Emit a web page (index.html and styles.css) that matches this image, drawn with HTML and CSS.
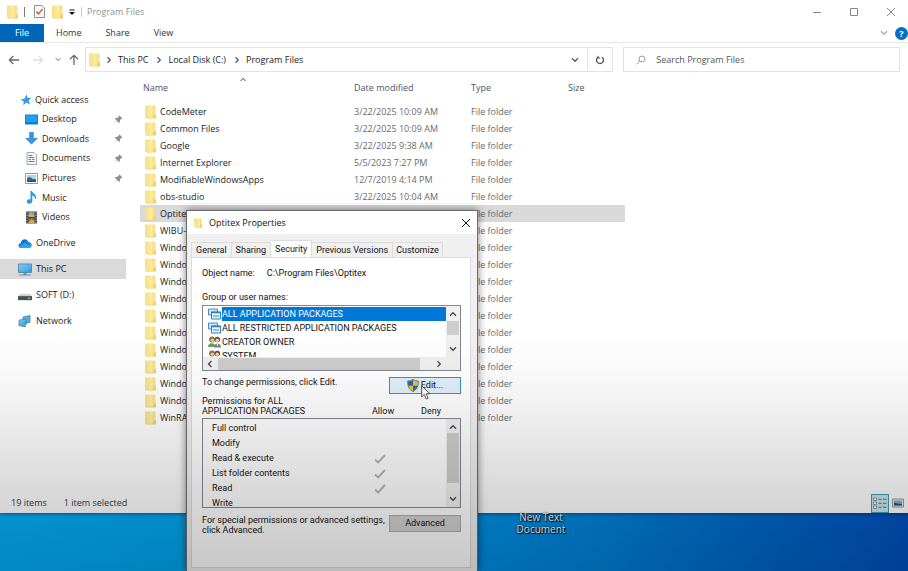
FILE: index.html
```html
<!DOCTYPE html>
<html lang="en">
<head>
<meta charset="utf-8">
<title>Program Files</title>
<link rel="stylesheet" href="styles.css">
</head>
<body>
<svg class="sprite" aria-hidden="true">
  <defs>
    <linearGradient id="g-folder" x1="0" x2="1" y1="0" y2="0"><stop offset="0" stop-color="#f8e080"/><stop offset=".7" stop-color="#fdeb9f"/><stop offset="1" stop-color="#f6d975"/></linearGradient>
    <linearGradient id="g-screen" x1="0" x2="1" y1="0" y2="1"><stop offset="0" stop-color="#7fd0f8"/><stop offset="1" stop-color="#2e97dc"/></linearGradient>
    <linearGradient id="g-cloud" x1="0" x2="1" y1="0" y2="1"><stop offset="0" stop-color="#0b5cb5"/><stop offset="1" stop-color="#28a8ea"/></linearGradient>
  </defs>
  <symbol id="folder" viewBox="0 0 12 14"><path d="M0 .5h9.500v12.500H0z" fill="url(#g-folder)"/><path d="M9 9h2v4.500H1v-.7h7z" fill="#f1d160"/><path d="M9 1l1 .5v9" stroke="#f3dc85" fill="none"/></symbol>
  <symbol id="star" viewBox="0 0 12 12"><path d="M6.500.5l1.200 3.600 3.800-.3-2.900 2.600 1.500 4-3.800-1.800-3 2.700.5-3.900L.5 5.600l4-.8z" fill="#2f9be6"/></symbol>
  <symbol id="desktop" viewBox="0 0 13 11"><path d="M0 .5h13v10H0z" fill="#1583d8"/><path d="M1 1.500h11v7H1z" fill="#1fa0f2"/><path d="M1 8.500h11v1H1z" fill="#0d6fc0"/></symbol>
  <symbol id="download" viewBox="0 0 13 13"><path d="M4.200 0h4.600v6H13l-6.500 6.500L0 6h4.200z" fill="#3c93dc"/></symbol>
  <symbol id="document" viewBox="0 0 12 13"><path d="M1.500.5h7l2.500 2.500v9.500h-9.500z" fill="#f4f8fb" stroke="#9aa9b5"/><path d="M3 3.500h4M3 5.500h6M3 7.500h2.500M6.500 7.500H9M3 9.500h6" stroke="#3f8fc6"/></symbol>
  <symbol id="picture" viewBox="0 0 13 11"><path d="M.5.5h12v10H.5z" fill="#fff" stroke="#8c9aa6"/><path d="M2 2h9v7H2z" fill="#a9d5f1"/><path d="M2 5l3-1 3 2 3 0v3H2z" fill="#336f8c"/><path d="M2 7.500h9V9H2z" fill="#1f5065"/></symbol>
  <symbol id="music" viewBox="0 0 12 13"><path d="M5 0h1.500c.3 2.500 4.500 3 4 6.500-.2 1-.7 1.700-1.200 2 .7-2.300-.8-3.700-2.500-4V10c0 3.500-5.500 3.500-5.500.7C1.300 8.500 3.600 8 5 8.600z" fill="#2c9bdf"/></symbol>
  <symbol id="video" viewBox="0 0 12 13"><path d="M.5.5h11v12H.5z" fill="#3b4352"/><path d="M3 1h6v5H3z" fill="#7e97b8"/><path d="M3 7h6v5H3z" fill="#756b52"/><path d="M3 4l3-2 3 3v1H3zM3 11l3-3 3 2v2H3z" fill="#d2a956"/><path d="M1.500 1.500v11M10.500 1.500v11" stroke="#dce0e4" stroke-dasharray="1 1.500"/></symbol>
  <symbol id="cloud" viewBox="0 0 14 10"><path d="M3.500 9.500C-.5 9.500-.3 5 2.800 4.800 3.300.3 9-.8 10.300 3.600c4.400.1 4.600 5.900.7 5.900z" fill="url(#g-cloud)"/><path d="M1 8l6-3.500L13 8c-.5 1-1 1.500-2.500 1.500h-7C2 9.500 1.500 9 1 8z" fill="#2aa4ea"/></symbol>
  <symbol id="pc" viewBox="0 0 14 12"><path d="M.5.500h13v8.500H.5z" fill="url(#g-screen)" stroke="#5f8aa6"/><path d="M5.500 9.500h3V11h-3zM1 11h12v1H1z" fill="#6f8ea3"/></symbol>
  <symbol id="drive" viewBox="0 0 12 8"><path d="M2 2.500h8l2 2H0z" fill="#d0d2d4"/><path d="M0 4.500h12V8H0z" fill="#4d5153"/><path d="M8.500 6.300h2" stroke="#6fdc82"/></symbol>
  <symbol id="network" viewBox="0 0 14 13"><path d="M5 2l7-1.500v7L5 9z" fill="#5badd9" stroke="#337ca8" stroke-width=".7"/><path d="M1 5l7-1v6l-7 1z" fill="url(#g-screen)" stroke="#347fab" stroke-width=".7"/><path d="M3 11.500l5-.8v1.300H3z" fill="#5f7f90"/></symbol>
  <symbol id="pin" viewBox="0 0 9 9"><path d="M5.300.3l3.200 3.200-1 .3-1.500 1.500-.2 2-.8.600L3 6 .4 8.600l-.2-.2L2.800 5.700.9 3.800l.7-.8 2-.2L5 1.300z" fill="#8b9095"/></symbol>
  <symbol id="chev-down" viewBox="0 0 8 6"><path d="M1 1.300l3 3 3-3" fill="none" stroke="currentColor" stroke-width="1.300"/></symbol>
  <symbol id="chev-up" viewBox="0 0 8 6"><path d="M1 4.700l3-3 3 3" fill="none" stroke="currentColor" stroke-width="1.300"/></symbol>
  <symbol id="chev-right" viewBox="0 0 6 8"><path d="M1.500 1.300L4.300 4l-2.800 2.700" fill="none" stroke="currentColor" stroke-width="1.200"/></symbol>
  <symbol id="chev-left" viewBox="0 0 6 8"><path d="M4.500 1L1.500 4l3 3" fill="none" stroke="currentColor" stroke-width="1.300"/></symbol>
  <symbol id="arrow" viewBox="0 0 12 10"><path d="M11 5H1.500M5.300 1L1.400 5l3.900 4" fill="none" stroke="currentColor" stroke-width="1.300"/></symbol>
  <symbol id="close" viewBox="0 0 10 10"><path d="M1 1l8 8M9 1L1 9" stroke="currentColor" fill="none"/></symbol>
  <symbol id="package" viewBox="0 0 13 11"><path d="M.5.5h9v6h-9z" fill="#c8e4f6" stroke="#4a8fc0"/><path d="M3.500 3.500h9v7h-9z" fill="#e9f5fc" stroke="#317fb8"/><path d="M3 4h10" stroke="#317fb8" stroke-width="1.500"/><path d="M5 7.500h6" stroke="#3b8dc4"/></symbol>
  <symbol id="users" viewBox="0 0 13 12"><circle cx="4" cy="3.500" r="2.900" fill="#8a7140"/><circle cx="4.300" cy="4.300" r="1.700" fill="#e8c79d"/><path d="M0 11c0-5 7.500-5 7.500 0z" fill="#6f9a64"/><circle cx="9.300" cy="3.500" r="2.800" fill="#5c4c3f"/><circle cx="9.300" cy="4.300" r="1.700" fill="#f1d1a8"/><path d="M6 11.500c0-5.500 7-5.500 7 0z" fill="#777f91"/><path d="M8.500 7.500h1.800l-.8 3z" fill="#fff"/></symbol>
  <symbol id="check" viewBox="0 0 12 10"><path d="M1 5.500l3.200 3L11 1" fill="none" stroke="#b4b4b4" stroke-width="1.900"/></symbol>
</svg>

<main class="explorer">
  <header class="titlebar">
    <svg class="i-folder"><use href="#folder"/></svg>
    <span class="rule"></span>
    <svg class="i-check" viewBox="0 0 11 13"><path d="M.5.500h7.500l2.500 2.500v9.500H.5z" fill="#fafafa" stroke="#8e8e8e"/><path d="M2.500 6.500l2 2.500L8.500 4" fill="none" stroke="#dc5140" stroke-width="1.400"/></svg>
    <svg class="i-folder"><use href="#folder"/></svg>
    <svg class="i-quick" viewBox="0 0 6 6"><path d="M.5 1h5" stroke="#111"/><path d="M0 3h6L3 6z" fill="#111"/></svg>
    <span class="rule light"></span>
    <h1>Program Files</h1>
    <div class="caption">
      <button aria-label="Minimize"><svg viewBox="0 0 10 10"><path d="M1 5.500h8" stroke="currentColor"/></svg></button>
      <button aria-label="Maximize"><svg viewBox="0 0 10 10"><path d="M1.500 1.500h7v7h-7z" fill="none" stroke="currentColor"/></svg></button>
      <button aria-label="Close"><svg><use href="#close"/></svg></button>
    </div>
  </header>

  <nav class="ribbon">
    <button class="file">File</button>
    <button>Home</button>
    <button>Share</button>
    <button>View</button>
    <div class="ribbon-end">
      <button class="expand" aria-label="Expand the ribbon"><svg class="i-chev"><use href="#chev-down"/></svg></button>
      <button class="help" aria-label="Help">?</button>
    </div>
  </nav>

  <div class="address-row">
    <button class="nav" aria-label="Back"><svg class="i-arrow"><use href="#arrow"/></svg></button>
    <button class="nav off" aria-label="Forward"><svg class="i-arrow flip"><use href="#arrow"/></svg></button>
    <button class="nav small" aria-label="Recent locations"><svg class="i-tiny"><use href="#chev-down"/></svg></button>
    <button class="nav up" aria-label="Up"><svg class="i-arrow turn"><use href="#arrow"/></svg></button>
    <div class="address">
      <svg class="i-folder"><use href="#folder"/></svg>
      <svg class="i-sep"><use href="#chev-right"/></svg>
      <a href="#pc">This PC</a>
      <svg class="i-sep"><use href="#chev-right"/></svg>
      <a href="#c">Local Disk (C:)</a>
      <svg class="i-sep"><use href="#chev-right"/></svg>
      <a href="#pf">Program Files</a>
      <button class="drop" aria-label="Previous locations"><svg class="i-chev"><use href="#chev-down"/></svg></button>
      <button class="refresh" aria-label="Refresh"><svg viewBox="0 0 10 10"><path d="M3 2.200A3.500 3.500 0 1 0 7 2.200" fill="none" stroke="currentColor" stroke-width="1.400"/><path d="M2.500.5v3h3z" fill="currentColor"/></svg></button>
    </div>
    <label class="search">
      <svg viewBox="0 0 10 10"><circle cx="6" cy="4" r="3" fill="none" stroke="#9b9b9b"/><path d="M3.800 6.200L.6 9.400" stroke="#9b9b9b"/></svg>
      <input type="search" placeholder="Search Program Files" aria-label="Search Program Files">
    </label>
  </div>

  <div class="body">
    <aside class="sidebar">
      <ul class="quick">
        <li class="root"><svg><use href="#star"/></svg><a href="#q">Quick access</a></li>
        <li><svg><use href="#desktop"/></svg><a href="#d">Desktop</a><svg class="pin"><use href="#pin"/></svg></li>
        <li><svg><use href="#download"/></svg><a href="#dl">Downloads</a><svg class="pin"><use href="#pin"/></svg></li>
        <li><svg><use href="#document"/></svg><a href="#doc">Documents</a><svg class="pin"><use href="#pin"/></svg></li>
        <li><svg><use href="#picture"/></svg><a href="#pic">Pictures</a><svg class="pin"><use href="#pin"/></svg></li>
        <li><svg><use href="#music"/></svg><a href="#mus">Music</a></li>
        <li><svg><use href="#video"/></svg><a href="#vid">Videos</a></li>
      </ul>
      <ul class="places">
        <li><svg><use href="#cloud"/></svg><a href="#od">OneDrive</a></li>
        <li class="current"><svg><use href="#pc"/></svg><a href="#tp">This PC</a></li>
        <li><svg><use href="#drive"/></svg><a href="#soft">SOFT (D:)</a></li>
        <li><svg><use href="#network"/></svg><a href="#net">Network</a></li>
      </ul>
    </aside>
    <section class="content">
      <svg class="sort"><use href="#chev-up"/></svg>
      <table class="files">
        <colgroup><col class="c-name"><col class="c-date"><col class="c-type"><col></colgroup>
        <thead><tr><th>Name</th><th>Date modified</th><th>Type</th><th>Size</th></tr></thead>
        <tbody>
          <tr><td><svg class="i-folder"><use href="#folder"/></svg>CodeMeter</td><td>3/22/2025 10:09 AM</td><td>File folder</td><td></td></tr>
          <tr><td><svg class="i-folder"><use href="#folder"/></svg>Common Files</td><td>3/22/2025 10:09 AM</td><td>File folder</td><td></td></tr>
          <tr><td><svg class="i-folder"><use href="#folder"/></svg>Google</td><td>3/22/2025 9:38 AM</td><td>File folder</td><td></td></tr>
          <tr><td><svg class="i-folder"><use href="#folder"/></svg>Internet Explorer</td><td>5/5/2023 7:27 PM</td><td>File folder</td><td></td></tr>
          <tr><td><svg class="i-folder"><use href="#folder"/></svg>ModifiableWindowsApps</td><td>12/7/2019 4:14 PM</td><td>File folder</td><td></td></tr>
          <tr><td><svg class="i-folder"><use href="#folder"/></svg>obs-studio</td><td>3/22/2025 10:04 AM</td><td>File folder</td><td></td></tr>
          <tr class="selected"><td><svg class="i-folder"><use href="#folder"/></svg>Optitex</td><td></td><td>File folder</td><td></td></tr>
          <tr><td><svg class="i-folder"><use href="#folder"/></svg>WIBU-</td><td></td><td>File folder</td><td></td></tr>
          <tr><td><svg class="i-folder"><use href="#folder"/></svg>Windows</td><td></td><td>File folder</td><td></td></tr>
          <tr><td><svg class="i-folder"><use href="#folder"/></svg>Windows</td><td></td><td>File folder</td><td></td></tr>
          <tr><td><svg class="i-folder"><use href="#folder"/></svg>Windows</td><td></td><td>File folder</td><td></td></tr>
          <tr><td><svg class="i-folder"><use href="#folder"/></svg>Windows</td><td></td><td>File folder</td><td></td></tr>
          <tr><td><svg class="i-folder"><use href="#folder"/></svg>Windows</td><td></td><td>File folder</td><td></td></tr>
          <tr><td><svg class="i-folder"><use href="#folder"/></svg>Windows</td><td></td><td>File folder</td><td></td></tr>
          <tr><td><svg class="i-folder"><use href="#folder"/></svg>Windows</td><td></td><td>File folder</td><td></td></tr>
          <tr><td><svg class="i-folder"><use href="#folder"/></svg>Windows</td><td></td><td>File folder</td><td></td></tr>
          <tr><td><svg class="i-folder"><use href="#folder"/></svg>Windows</td><td></td><td>File folder</td><td></td></tr>
          <tr><td><svg class="i-folder"><use href="#folder"/></svg>Windows</td><td></td><td>File folder</td><td></td></tr>
          <tr><td><svg class="i-folder"><use href="#folder"/></svg>WinRAR</td><td></td><td>File folder</td><td></td></tr>
        </tbody>
      </table>
    </section>
  </div>

  <footer class="status">
    <span>19 items</span>
    <span>1 item selected</span>
    <div class="views">
      <button class="on" aria-label="Details view"><svg viewBox="0 0 14 12"><path d="M.5 1h3v2.500h-3zM.5 5h3v2.500h-3zM.5 9h3v2.500h-3z" fill="#fff" stroke="#7d8c94" stroke-width=".8"/><path d="M5.500 2.300h3M10 2.300h3.500M5.500 6.300h3M10 6.300h3.500M5.500 10.300h3M10 10.300h3.500" stroke="#5f7780"/></svg></button>
      <button aria-label="Large icons view"><svg viewBox="0 0 12 9"><path d="M.5.500h11v8H.5z" fill="#eee" stroke="#999"/><path d="M2 2h8v5H2z" fill="#84add0"/><path d="M2 4l3 1 5 .5V7H2z" fill="#285672"/></svg></button>
    </div>
  </footer>
</main>

<div class="desktop"><span class="shortcut">New Text Document</span></div>

<section class="dialog" role="dialog" aria-labelledby="dlg-title">
  <header class="dialog-title">
    <svg class="i-mini"><use href="#folder"/></svg>
    <h2 id="dlg-title">Optitex Properties</h2>
    <button aria-label="Close"><svg><use href="#close"/></svg></button>
  </header>
  <div class="dialog-body">
    <div class="tabs" role="tablist">
      <button role="tab">General</button>
      <button role="tab">Sharing</button>
      <button role="tab" class="active" aria-selected="true">Security</button>
      <button role="tab">Previous Versions</button>
      <button role="tab">Customize</button>
    </div>
    <div class="panel" role="tabpanel">
      <p class="object"><span>Object name:</span><span>C:\Program Files\Optitex</span></p>
      <p class="group-label" id="groups">Group or user names:</p>
      <div class="groups">
        <div class="groups-view">
          <ul role="listbox" aria-labelledby="groups">
            <li role="option" aria-selected="true" class="picked"><svg><use href="#package"/></svg><span>ALL APPLICATION PACKAGES</span></li>
            <li role="option"><svg><use href="#package"/></svg><span>ALL RESTRICTED APPLICATION PACKAGES</span></li>
            <li role="option"><svg><use href="#users"/></svg><span>CREATOR OWNER</span></li>
            <li role="option"><svg><use href="#users"/></svg><span>SYSTEM</span></li>
          </ul>
          <div class="vbar"><svg class="i-chev"><use href="#chev-up"/></svg><i class="thumb short"></i><svg class="i-chev end"><use href="#chev-down"/></svg></div>
        </div>
        <div class="hbar"><svg class="i-side"><use href="#chev-left"/></svg><i></i><svg class="i-side"><use href="#chev-right"/></svg></div>
      </div>
      <div class="action">
        <p>To change permissions, click Edit.</p>
        <button class="btn edit"><svg viewBox="0 0 12 13"><path d="M6 .5C4.500 1.500 2.500 2 .7 2c0 5 1 8.500 5.300 10.500C10.300 10.500 11.300 7 11.300 2 9.500 2 7.500 1.500 6 .5z" fill="#f5c22f" stroke="#71757a"/><path d="M6 1v5.800H1.300C1 5.500 1 4 1 2.400 3 2.300 4.800 1.800 6 1zM6 6.800h4.700C10 9.300 8.500 11 6 12z" fill="#2469b3"/></svg>Edit...</button>
      </div>
      <div class="perm-head"><p id="perms">Permissions for ALL<br>APPLICATION PACKAGES</p><span>Allow</span><span>Deny</span></div>
      <div class="perms">
        <table aria-labelledby="perms">
          <tr><td>Full control</td><td></td></tr>
          <tr><td>Modify</td><td></td></tr>
          <tr><td>Read &amp; execute</td><td><svg><use href="#check"/></svg></td></tr>
          <tr><td>List folder contents</td><td><svg><use href="#check"/></svg></td></tr>
          <tr><td>Read</td><td><svg><use href="#check"/></svg></td></tr>
          <tr><td>Write</td><td></td></tr>
        </table>
        <div class="vbar"><svg class="i-chev"><use href="#chev-up"/></svg><i class="thumb tall"></i><svg class="i-chev end"><use href="#chev-down"/></svg></div>
      </div>
      <div class="action advanced">
        <p>For special permissions or advanced settings,<br>click Advanced.</p>
        <button class="btn grey">Advanced</button>
      </div>
    </div>
  </div>
  <svg class="cursor" viewBox="0 0 10 15"><path d="M.7.900v11l2.600-2.400 1.900 4.500 1.900-.8-1.900-4.400H9z" fill="#fff" stroke="#333" stroke-width=".8"/></svg>
</section>
<div class="shade"></div>
</body>
</html>
```

FILE: styles.css
```css
* { box-sizing: border-box; }
body {
  margin: 0;
  min-height: 100vh;
  display: flex;
  flex-direction: column;
  position: relative;
  overflow: hidden;
  background: linear-gradient(90deg, #04b0fa 0%, #00a8f2 20%, #0090e6 53%, #0084da 66%, #006acc 82%, #0052c0 100%);
  font: 9px/14px "Open Sans", "Noto Sans", sans-serif;
  color: #1c1c1c;
}
button, input { font: inherit; color: inherit; border: 0; padding: 0; background: none; }
ul { list-style: none; margin: 0; padding: 0; }
h1, h2, p { margin: 0; font-size: inherit; font-weight: inherit; }
a { color: inherit; text-decoration: none; }
svg { display: block; flex: none; }
.sprite { position: absolute; width: 0; height: 0; }
.i-folder { width: 12px; height: 14px; }
.i-chev { width: 8px; height: 6px; }

.explorer {
  flex: 1;
  display: flex;
  flex-direction: column;
  background: #fff;
  box-shadow: 0 1px 3px rgba(0, 20, 60, .5);
}

/* Title bar */
.titlebar { display: flex; align-items: center; height: 23px; margin-bottom: 1px; padding-left: 7px; color: #919191; }
.titlebar .rule { width: 1px; height: 10px; margin: 0 9px 0 5px; background: #777; }
.titlebar .rule.light { margin: 0 5px 0 6px; background: #ccc; }
.i-check { width: 11px; height: 13px; margin-right: 7px; }
.i-quick { width: 6px; height: 6px; margin-left: 5px; }
.caption { display: flex; margin-left: auto; gap: 27px; padding-right: 12px; color: #888; }
.caption button, .caption svg { width: 10px; height: 10px; }

/* Ribbon */
.ribbon { display: flex; height: 19px; border-bottom: 1px solid #e8e8e8; color: #333; }
.ribbon > button { padding: 0 12px; }
.ribbon .file { width: 44px; background: #0067b8; color: #fff; }
.ribbon-end { display: flex; align-items: center; gap: 7px; margin-left: auto; color: #aaa; }
.help { width: 13px; height: 13px; border-radius: 50%; background: #0a6cc0; color: #fff; font-weight: 700; line-height: 13px; }

/* Address row */
.address-row { display: flex; align-items: center; height: 33px; padding: 0 8px; color: #222; }
.nav { display: flex; justify-content: center; width: 12px; color: #666; }
.nav.off { margin-left: 12px; color: #ddd; }
.nav.small { margin-left: 10px; width: 8px; }
.nav.up { margin: 0 4px; width: 16px; }
.i-arrow { width: 12px; height: 10px; }
.flip { transform: scaleX(-1); }
.turn { transform: rotate(90deg); }
.i-tiny { width: 6px; height: 5px; }
.i-sep { width: 6px; height: 8px; margin: 0 6px 0 5px; color: #555; }
.address { flex: 536; display: flex; align-items: center; height: 25px; margin-left: -1px; padding-left: 3px; border: 1px solid #e2e2e2; }
.address a { margin-right: 3px; }
.drop { margin-left: auto; padding: 0 8px; color: #555; }
.refresh { height: 100%; width: 25px; border-left: 1px solid #e2e2e2; display: flex; align-items: center; justify-content: center; color: #555; }
.refresh svg { width: 10px; height: 10px; }
.search { flex: 269; display: flex; align-items: center; gap: 10px; height: 25px; margin-left: 10px; padding-left: 12px; border: 1px solid #e2e2e2; }
.search svg { width: 10px; height: 10px; }
.search input { flex: 1; min-width: 0; outline: 0; }
.search input::placeholder { color: #555; opacity: 1; }

/* Body */
.body { flex: 1; display: flex; min-height: 0; padding-top: 1px; }
.sidebar { width: 126px; padding-top: 13px; flex: none; }
.sidebar li { display: flex; align-items: center; }
.quick { display: grid; grid-auto-rows: 1fr; height: 137px; }
.quick li { padding: 0 3px 0 25px; gap: 4px; }
.quick li.root { padding-left: 20px; gap: 3px; }
.quick svg { width: 13px; height: 13px; }
.quick .root svg { width: 12px; height: 12px; }
.quick svg.pin { width: 9px; height: 9px; margin-left: auto; }
.places { display: grid; gap: 6px; margin-top: 6px; }
.places li { height: 20px; gap: 4px; padding-left: 18px; }
.places .current { background: #dadada; }
.places svg { width: 14px; height: 13px; }

.content { flex: 1; position: relative; padding-left: 14px; }
.sort { position: absolute; left: 113px; top: 0; width: 8px; height: 5px; color: #777; }
.files { width: 485px; table-layout: fixed; border-collapse: collapse; color: #666b70; }
.c-name { width: 214px; }
.c-date { width: 117px; }
.c-type { width: 97px; }
.files th { height: 26px; padding: 0 0 4px; font-weight: 400; text-align: left; color: #4d5565; }
.files th:first-child { padding-left: 3px; }
.files td { height: 17px; padding: 0; line-height: 17px; white-space: nowrap; }
.files td:first-child { display: flex; align-items: center; gap: 3px; padding-left: 5px; color: #1c1c1c; }
.selected { background: #d9d9d9; }

.status { display: flex; align-items: center; height: 20px; gap: 17px; padding: 0 3px 0 11px; color: #303a50; }
.views { display: flex; align-items: center; margin-left: auto; gap: 2px; }
.views button { display: grid; place-items: center; width: 14px; height: 19px; }
.views .on { width: 18px; background: #c9e6ee; border: 1px solid #3ba0b8; }
.views svg { width: 12px; height: 10px; }
.views .on svg { width: 14px; height: 12px; }

.desktop { height: 58px; }
.shortcut { position: absolute; left: 511px; bottom: 36px; width: 60px; font-size: 10px; line-height: 12px; text-align: center; color: #fff; text-shadow: 1px 1px 1px #000, 0 0 2px #000; }

/* Properties window */
.dialog {
  position: absolute;
  z-index: 2;
  left: 186px;
  top: 210px;
  bottom: 0;
  width: 292px;
  background: #f0f0f0;
  border: 1px solid #6b6b6b;
  border-bottom: 0;
  box-shadow: 0 0 8px rgba(0, 0, 0, .5);
  color: #111;
  font: 9px/11px Roboto, "Liberation Sans", sans-serif;
}
.dialog-title { display: flex; align-items: center; height: 23px; padding: 0 6px 0 7px; background: #fff; font: 9px/14px "Open Sans", sans-serif; }
.i-mini { width: 9px; height: 10px; margin-right: 6px; }
.dialog-title button { margin-left: auto; }
.dialog-title button svg { width: 10px; height: 10px; }
.dialog-body { padding: 6px 6px 3px 4px; height: calc(100% - 23px); display: flex; flex-direction: column; }
.tabs { display: flex; align-items: flex-end; }
.tabs button { height: 15px; padding: 0 4px; border: 1px solid #dcdcdc; border-bottom: 0; border-left-width: 0; white-space: nowrap; }
.tabs button:first-child { border-left-width: 1px; }
.tabs button:last-child { padding: 0 3px; }
.tabs .active { height: 18px; background: #fff; margin-bottom: -1px; }
.panel { flex: 1; padding: 10px 9px 0 10px; background: #fff; border: 1px solid #dcdcdc; }
.object { display: flex; gap: 12px; }
.group-label { margin-top: 13px; }
.groups { margin-top: 2px; border: 1px solid #828790; }
.groups-view { display: flex; height: 51px; overflow: hidden; }
.groups ul { flex: 1; padding-top: 1px; overflow: hidden; }
.groups li { display: flex; align-items: center; height: 14px; padding-left: 5px; gap: 1px; white-space: nowrap; }
.groups li svg { width: 13px; height: 12px; }
.groups li span { flex: 1; line-height: 14px; }
.groups .picked span { background: #0078d7; color: #fff; }
.vbar { display: flex; flex: none; flex-direction: column; align-items: center; width: 14px; padding: 5px 0; background: #f0f0f0; color: #444; }
.vbar .end { margin-top: auto; }
.thumb { width: 12px; background: #cdcdcd; }
.short { height: 14px; margin-top: 4px; }
.tall { height: 50px; margin-top: 3px; }
.hbar { display: flex; align-items: center; height: 13px; padding: 0 18px 0 4px; background: #f0f0f0; color: #444; }
.hbar i { flex: 1; height: 12px; margin: 0 16px 0 5px; background: #cdcdcd; }
.i-side { width: 6px; height: 8px; }
.action { display: flex; justify-content: space-between; margin-top: 6px; }
.btn { display: flex; flex: none; align-items: center; justify-content: center; gap: 2px; width: 72px; height: 17px; background: #e1e1e1; border: 1px solid #adadad; }
.btn.edit { background: #e0effa; border-color: #3c8fce; }
.btn.edit svg { width: 12px; height: 13px; }
.btn.grey { background: #d2d2d2; }
.perm-head { display: flex; align-items: flex-end; line-height: 10px; margin-top: 2px; }
.perm-head p { flex: none; width: 170px; }
.perm-head span { flex: none; width: 49px; }
.perms { display: flex; height: 90px; margin-top: 2px; overflow: hidden; border: 1px solid #828790; }
.perms table { flex: 1; border-collapse: collapse; margin-top: 2px; }
.perms td { height: 15px; padding: 0; }
.perms td:first-child { width: 171px; padding-left: 9px; }
.perms td svg { width: 12px; height: 10px; }
.action.advanced { align-items: flex-start; margin-top: 7px; }
.action.advanced p { line-height: 10px; white-space: nowrap; }
.cursor { position: absolute; left: 234px; top: 174px; width: 10px; height: 15px; }

.shade {
  position: absolute;
  z-index: 3;
  inset: 0;
  pointer-events: none;
  background: linear-gradient(rgba(0, 0, 0, 0) 58%, rgba(0, 0, 0, .03) 67%, rgba(0, 0, 0, .16) 88%, rgba(0, 0, 0, .22) 100%);
}
```
